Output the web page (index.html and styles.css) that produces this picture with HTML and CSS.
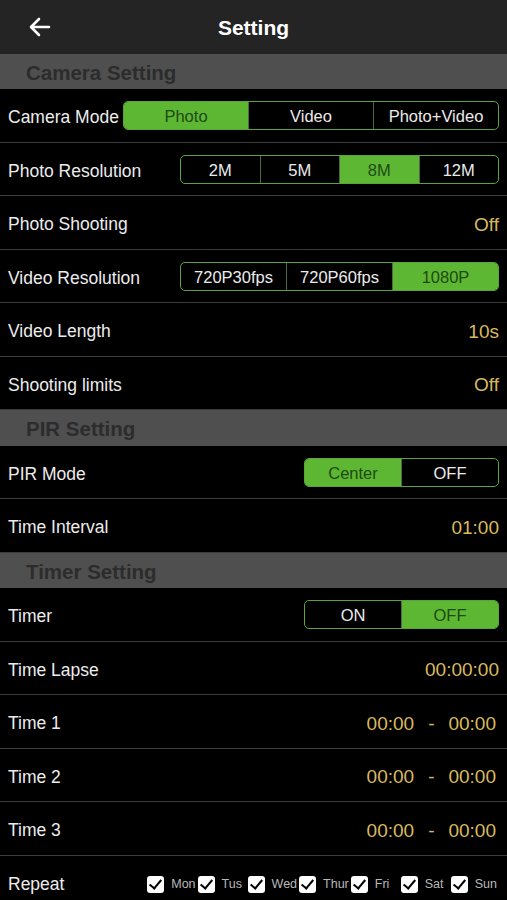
FILE: index.html
```html
<!DOCTYPE html>
<html lang="en">
<head>
    <meta charset="UTF-8">
    <meta name="viewport" content="width=device-width, initial-scale=1.0">
    <title>Setting</title>
    <link rel="stylesheet" href="styles.css">
</head>
<body>

<header class="topbar">
    <svg class="back" width="22" height="20" viewBox="0 0 22 20">
        <path d="M20 10 H3 M10 2 L2 10 L10 18" fill="none" stroke="#fff" stroke-width="2.6" stroke-linecap="round" stroke-linejoin="round"/>
    </svg>
    <h1>Setting</h1>
</header>

<!-- Camera -->
<div class="section">Camera Setting</div>
<div class="row">
    <span class="label">Camera Mode</span>
    <div class="seg seg-mode">
        <span class="on">Photo</span><span>Video</span><span>Photo+Video</span>
    </div>
</div>
<div class="row">
    <span class="label">Photo Resolution</span>
    <div class="seg seg-wide">
        <span>2M</span><span>5M</span><span class="on">8M</span><span>12M</span>
    </div>
</div>
<div class="row">
    <span class="label">Photo Shooting</span>
    <span class="value">Off</span>
</div>
<div class="row">
    <span class="label">Video Resolution</span>
    <div class="seg seg-wide">
        <span>720P30fps</span><span>720P60fps</span><span class="on">1080P</span>
    </div>
</div>
<div class="row">
    <span class="label">Video Length</span>
    <span class="value">10s</span>
</div>
<div class="row">
    <span class="label">Shooting limits</span>
    <span class="value">Off</span>
</div>

<!-- PIR -->
<div class="section">PIR Setting</div>
<div class="row">
    <span class="label">PIR Mode</span>
    <div class="seg seg-small">
        <span class="on">Center</span><span>OFF</span>
    </div>
</div>
<div class="row">
    <span class="label">Time Interval</span>
    <span class="value">01:00</span>
</div>

<!-- Timer -->
<div class="section">Timer Setting</div>
<div class="row">
    <span class="label">Timer</span>
    <div class="seg seg-small">
        <span>ON</span><span class="on">OFF</span>
    </div>
</div>
<div class="row">
    <span class="label">Time Lapse</span>
    <span class="value">00:00:00</span>
</div>
<div class="row">
    <span class="label">Time 1</span>
    <span class="value range"><span>00:00</span><span>-</span><span>00:00</span></span>
</div>
<div class="row">
    <span class="label">Time 2</span>
    <span class="value range"><span>00:00</span><span>-</span><span>00:00</span></span>
</div>
<div class="row">
    <span class="label">Time 3</span>
    <span class="value range"><span>00:00</span><span>-</span><span>00:00</span></span>
</div>
<div class="row">
    <span class="label">Repeat</span>
    <div class="days">
        <span class="day"><i class="box"></i>Mon</span>
        <span class="day"><i class="box"></i>Tus</span>
        <span class="day"><i class="box"></i>Wed</span>
        <span class="day"><i class="box"></i>Thur</span>
        <span class="day"><i class="box"></i>Fri</span>
        <span class="day"><i class="box"></i>Sat</span>
        <span class="day"><i class="box"></i>Sun</span>
    </div>
</div>

</body>
</html>
```

FILE: styles.css
```css
body {
    font-family: "Liberation Sans", Arial, sans-serif;
    margin: 0;
    padding: 0;
    background-color: #000;
    color: #ececec;
    overflow: hidden;
}
.topbar {
    height: 53.5px;
    background-color: #242424;
    display: flex;
    align-items: center;
    justify-content: center;
    position: relative;
}
.topbar h1 {
    margin: 0;
    padding-top: 2px;
    font-size: 21px;
    font-weight: bold;
    color: #fff;
}
.back {
    position: absolute;
    left: 29px;
    top: 17px;
}
.section {
    height: 35.5px;
    line-height: 38px;
    background-color: #4f4f4f;
    color: #2c2c2c;
    font-size: 20.5px;
    font-weight: bold;
    padding-left: 26px;
}
.row {
    height: 53.5px;
    box-sizing: border-box;
    border-bottom: 1px solid #3c3c3c;
    display: flex;
    align-items: center;
    justify-content: space-between;
    padding: 1px 8px 0;
}
.row:last-child {
    border-bottom: none;
}
.label {
    font-size: 17.5px;
    padding-top: 4px;
}
.value {
    font-size: 19px;
    color: #d9b95e;
    padding-top: 4px;
}
.range {
    display: flex;
    gap: 14px;
    padding-right: 3px;
}
.seg {
    display: flex;
    height: 29px;
    border: 1px solid #5aa53b;
    border-radius: 5px;
    overflow: hidden;
    box-sizing: border-box;
    font-size: 16.5px;
}
.seg span {
    flex: 1;
    text-align: center;
    line-height: 28px;
    color: #ebebeb;
    border-left: 1px solid #4d6a40;
}
.seg span:first-child {
    border-left: none;
}
.seg .on {
    background-color: #5db733;
    color: #1d4a14;
}
.seg-mode {
    width: 376px;
}
.seg-wide {
    width: 319px;
}
.seg-small {
    width: 195px;
}
.days {
    display: flex;
    padding-top: 3px;
}
.day {
    display: flex;
    align-items: center;
    min-width: 50px;
    padding-right: 2px;
    box-sizing: border-box;
    font-size: 12.5px;
    color: #b9b9b9;
}
.day:last-child {
    min-width: 0;
}
.box {
    width: 17px;
    height: 17px;
    border-radius: 3px;
    background-color: #fff;
    margin-right: 7px;
    position: relative;
}
.box::after {
    content: "";
    position: absolute;
    left: 5px;
    top: 1px;
    width: 5px;
    height: 10px;
    border: solid #000;
    border-width: 0 2.5px 2.5px 0;
    transform: rotate(40deg);
}
```
